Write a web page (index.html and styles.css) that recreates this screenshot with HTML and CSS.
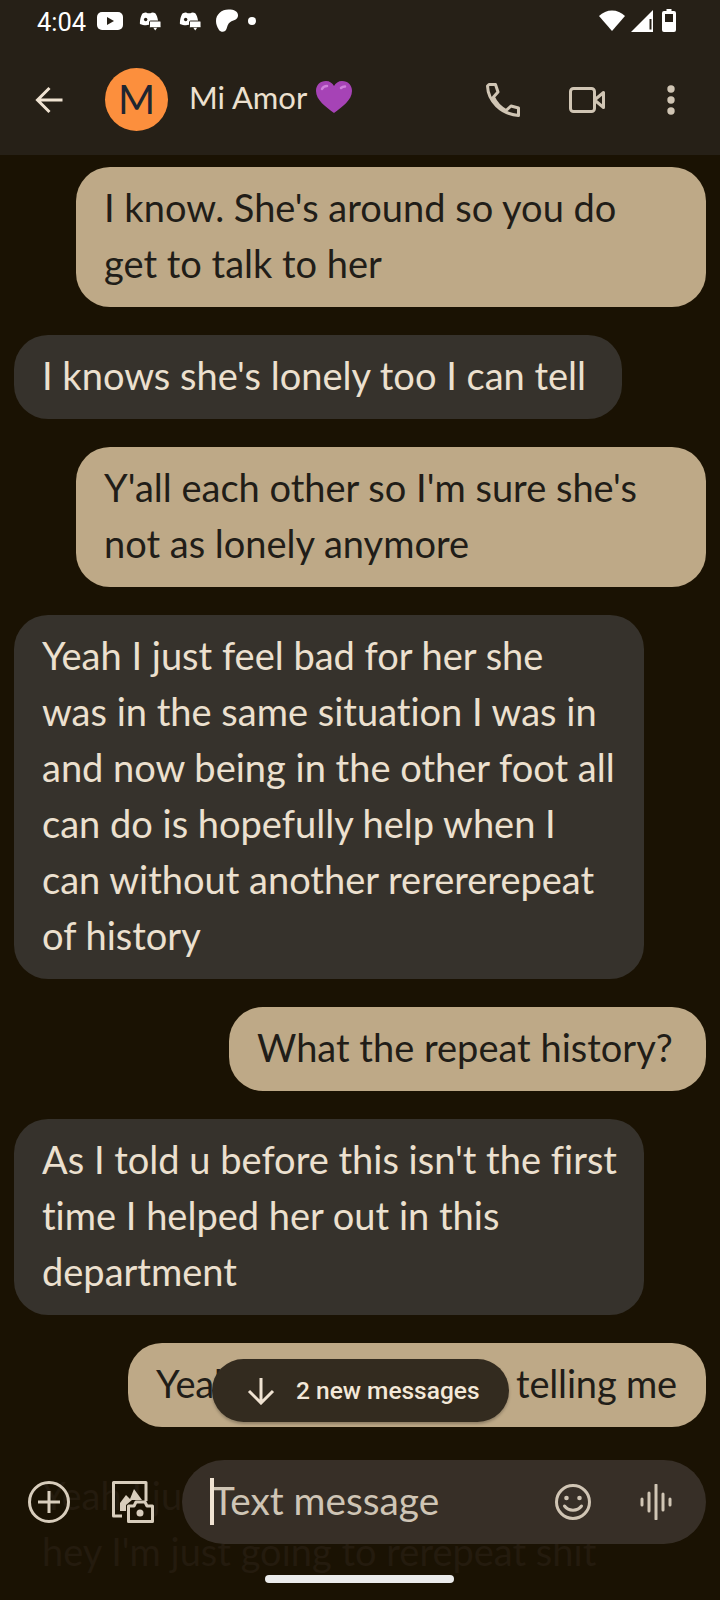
FILE: index.html

```html
<!DOCTYPE html>
<html lang="en">
<head>
    <meta charset="UTF-8">
    <meta name="viewport" content="width=device-width, initial-scale=1.0">
    <title>Mi Amor</title>
    <link rel="stylesheet" href="styles.css">
</head>
<body>
    <div class="screen">
        <header class="top">
            <div class="status">
                <span class="clock">4:04</span>
                <svg class="st-yt" viewBox="0 0 26 18"><rect width="26" height="18" rx="5" fill="#fff"/><path d="M10 5l7 4-7 4z" fill="#262017"/></svg>
                <svg class="st-chat" viewBox="0 0 24 20"><path d="M5 2c3-1.500 4-1 5 0h3c1-1 3-1.500 5 0 1.500 1.500 2.500 5 3 8h-8v5l-2-1c-3 1-6 0-9-1C2 9 3 4 5 2z" fill="#fff"/><circle cx="8" cy="8.500" r="1.800" fill="#262017"/><rect x="12" y="10" width="12" height="7" rx="1" fill="#fff" stroke="#262017"/><path d="M16 17h4l-2 3z" fill="#fff"/></svg>
                <svg class="st-chat" viewBox="0 0 24 20"><path d="M5 2c3-1.500 4-1 5 0h3c1-1 3-1.500 5 0 1.500 1.500 2.500 5 3 8h-8v5l-2-1c-3 1-6 0-9-1C2 9 3 4 5 2z" fill="#fff"/><circle cx="8" cy="8.500" r="1.800" fill="#262017"/><rect x="12" y="10" width="12" height="7" rx="1" fill="#fff" stroke="#262017"/><path d="M16 17h4l-2 3z" fill="#fff"/></svg>
                <svg class="st-blob" viewBox="0 0 24 24"><path d="M0 12C0 5 6 0 13 0c6 0 10 2 10 6 0 5-5 5-8 7-3 2-3 5-4 7-1 4-6 4-8 1C1 18 0 15 0 12z" fill="#fff"/></svg>
                <span class="st-dot"></span>
                <span class="status-right">
                    <svg class="st-wifi" viewBox="0 0 26 21"><path d="M0 6C7-1.500 19-1.500 26 6L13 21z" fill="#fff"/></svg>
                    <svg class="st-signal" viewBox="0 0 22 22"><path d="M22 0v22H0z" fill="#fff"/><path d="M18.500 9v10.500h2V9z" fill="#262017"/></svg>
                    <svg class="st-batt" viewBox="0 0 14 23"><path d="M4.500 0h5v2H12a2 2 0 0 1 2 2v17a2 2 0 0 1-2 2H2a2 2 0 0 1-2-2V4a2 2 0 0 1 2-2h2.500z" fill="#fff"/><rect x="3" y="5" width="8" height="8" fill="#262017"/></svg>
                </span>
            </div>
            <div class="toolbar">
                <svg class="ic-back" viewBox="0 0 28 28"><path d="M27 14H3M14 2L2 14l12 12" fill="none" stroke="#f0e3d2" stroke-width="3"/></svg>
                <div class="avatar">M</div>
                <div class="name">Mi Amor <svg class="heart" viewBox="0 0 36 32"><path d="M18 32C10 26 0 19 0 10 0 4 4 0 10 0c3.500 0 6.500 2 8 5 1.500-3 4.500-5 8-5 6 0 10 4 10 10 0 9-10 16-18 22z" fill="#a643b6"/><path d="M6 8c1-2 3-3 5-3" fill="none" stroke="#cf7fdb" stroke-width="2.500" stroke-linecap="round"/><path d="M25 7c1-1 2-1.500 4-1.500" fill="none" stroke="#cf7fdb" stroke-width="2.500" stroke-linecap="round"/></svg></div>
                <div class="actions">
                    <svg class="ic-phone" viewBox="0 0 34 34"><path d="M3 1.500H9.500L12 9 7.500 14C10 20 14 24 20 27.500L25 23 32.500 25V32.500C15 31 2 18 1.500 3z" fill="none" stroke="#d0c5b4" stroke-width="3" stroke-linejoin="round"/></svg>
                    <svg class="ic-video" viewBox="0 0 36 26"><rect x="1.500" y="1.500" width="24" height="23" rx="3" fill="none" stroke="#d0c5b4" stroke-width="3"/><path d="M25.500 13l9-7.500v15z" fill="none" stroke="#d0c5b4" stroke-width="3" stroke-linejoin="round"/></svg>
                    <svg class="ic-more" viewBox="0 0 8 30"><circle cx="4" cy="4" r="3.700" fill="#d0c5b4"/><circle cx="4" cy="15" r="3.700" fill="#d0c5b4"/><circle cx="4" cy="26" r="3.700" fill="#d0c5b4"/></svg>
                </div>
            </div>
        </header>

        <main class="thread">
            <div class="msg sent wide">I know. She's around so you do get to talk to her</div>
            <div class="msg recv w-lonely">I knows she's lonely too I can tell</div>
            <div class="msg sent wide">Y'all each other so I'm sure she's not as lonely anymore</div>
            <div class="msg recv wide">Yeah I just feel bad for her she was in the same situation I was in and now being in the other foot all can do is hopefully help when I can without another rerererepeat of history</div>
            <div class="msg sent w-repeat">What the repeat history?</div>
            <div class="msg recv wide lines">As I told u before this isn't the first<br>time I helped her out in this<br>department</div>
            <div class="msg sent w-telling">Yeah I know you kept telling me</div>
            <div class="msg ghost">Yeah I just<br>hey I'm just going to rerepeat shit</div>
        </main>

        <div class="new-pill">
            <svg class="ic-down" viewBox="0 0 28 28"><path d="M14 1v25M2 14l12 12 12-12" fill="none" stroke="#f0e3d2" stroke-width="3"/></svg>
            <span>2 new messages</span>
        </div>

        <footer class="composer">
            <svg class="ic-add" viewBox="0 0 42 42"><circle cx="21" cy="21" r="19.500" fill="none" stroke="#d8cdbc" stroke-width="3"/><path d="M21 10v22M10 21h22" fill="none" stroke="#d8cdbc" stroke-width="3"/></svg>
            <svg class="ic-media" viewBox="0 0 42 42"><path d="M10 35H1.500V1.500H34V20" fill="none" stroke="#d8cdbc" stroke-width="3" stroke-linejoin="round"/><path d="M8 30V22L14 14 18 18 22 8 30 19H20L14 24V30z" fill="#d8cdbc"/><path d="M16.500 25H22L24 21H33L35 25H40.500V40.500H16.500z" fill="#1a1203" stroke="#d8cdbc" stroke-width="3" stroke-linejoin="round"/><circle cx="28" cy="32" r="3.500" fill="#d8cdbc"/></svg>
            <div class="field">
                <span class="caret"></span>
                <span class="placeholder">Text message</span>
                <svg class="ic-emoji" viewBox="0 0 36 36"><circle cx="18" cy="18" r="16.500" fill="none" stroke="#d0c5b4" stroke-width="3"/><circle cx="11.500" cy="14" r="2.300" fill="#d0c5b4"/><circle cx="24.500" cy="14" r="2.300" fill="#d0c5b4"/><path d="M9.500 22c4 5.500 13 5.500 17 0" fill="none" stroke="#d0c5b4" stroke-width="3" stroke-linecap="round"/></svg>
                <svg class="ic-voice" viewBox="0 0 32 36"><path d="M2 15v6M9 9v18M16 1v34M23 10v16M30 15v6" fill="none" stroke="#d0c5b4" stroke-width="3" stroke-linecap="round"/></svg>
            </div>
        </footer>

        <div class="home-bar"></div>
    </div>
</body>
</html>
```

FILE: styles.css

```css
* {
    box-sizing: border-box;
}
body {
    margin: 0;
    background-color: #1a1203;
    font-family: Lato, "Noto Sans", sans-serif;
    font-variant-ligatures: none;
}
.screen {
    position: relative;
    width: 720px;
    height: 1600px;
    overflow: hidden;
    background-color: #1a1203;
}
.top {
    height: 155px;
    background-color: #262017;
}
.status {
    display: flex;
    align-items: center;
    height: 44px;
    padding: 0 44px 0 37px;
    color: #fff;
}
.clock {
    font-family: Roboto, sans-serif;
    font-size: 25.5px;
    margin-right: 11px;
}
.st-yt {
    width: 26px;
    height: 18px;
    margin-right: 15px;
    margin-bottom: 3px;
}
.st-chat {
    width: 23px;
    height: 20px;
    margin-right: 17px;
    margin-bottom: 2px;
}
.st-blob {
    width: 23px;
    height: 24px;
    margin-left: -2px;
    margin-right: 9px;
    margin-bottom: 3px;
}
.st-dot {
    width: 8px;
    height: 8px;
    margin-bottom: 3px;
    border-radius: 50%;
    background-color: #fff;
}
.status-right {
    display: flex;
    align-items: center;
    margin-left: auto;
    margin-bottom: 3px;
    gap: 6px;
}
.st-wifi {
    width: 26px;
    height: 21px;
}
.st-signal {
    width: 22px;
    height: 22px;
}
.st-batt {
    width: 14px;
    height: 23px;
    margin-left: 3px;
}
.toolbar {
    display: flex;
    align-items: center;
    height: 111px;
    padding-left: 35px;
}
.ic-back {
    width: 29px;
    height: 28px;
}
.avatar {
    width: 63px;
    height: 63px;
    margin-left: 41px;
    border-radius: 50%;
    background-color: #fc8f3d;
    color: #202530;
    font-size: 40px;
    line-height: 63px;
    text-align: center;
}
.name {
    display: flex;
    align-items: center;
    gap: 9px;
    margin-left: 21px;
    margin-bottom: 5px;
    color: #ece0cf;
    font-size: 31px;
}
.heart {
    width: 36px;
    height: 32px;
}
.actions {
    display: flex;
    align-items: center;
    margin-left: auto;
    padding-right: 45px;
}
.ic-phone {
    width: 34px;
    height: 34px;
}
.ic-video {
    width: 36px;
    height: 26px;
    margin-left: 49px;
}
.ic-more {
    width: 8px;
    height: 30px;
    margin-left: 62px;
}
.thread {
    display: flex;
    flex-direction: column;
    gap: 28px;
    padding: 12px 14px 0;
}
.msg {
    padding: 12px 28px 16px;
    border-radius: 34px;
    font-size: 38px;
    line-height: 56px;
    max-width: 630px;
}
.msg.wide {
    width: 630px;
}
.lines {
    white-space: nowrap;
}
.w-lonely {
    width: 608px;
    white-space: nowrap;
}
.w-repeat {
    width: 477px;
    white-space: nowrap;
}
.w-telling {
    width: 578px;
    white-space: nowrap;
    letter-spacing: -0.17px;
}
.sent {
    align-self: flex-end;
    background-color: #bea987;
    color: #211d18;
}
.recv {
    align-self: flex-start;
    background-color: #36322c;
    color: #ece0cf;
}
.ghost {
    align-self: flex-start;
    width: 630px;
    color: #241b0e;
}
.new-pill {
    position: absolute;
    left: 212px;
    top: 1359px;
    display: flex;
    align-items: center;
    width: 297px;
    height: 63px;
    padding-left: 35px;
    border-radius: 32px;
    background-color: #332b1f;
    box-shadow: 0 2px 3px rgba(0, 0, 0, 0.25);
    color: #f3e8d8;
    font-family: Roboto, sans-serif;
    font-size: 24.5px;
    font-weight: 500;
}
.ic-down {
    width: 28px;
    height: 28px;
    margin-right: 21px;
}
.composer {
    position: absolute;
    left: 0;
    right: 14px;
    top: 1460px;
    display: flex;
    align-items: center;
    height: 84px;
    padding-left: 28px;
}
.ic-add {
    width: 42px;
    height: 42px;
}
.ic-media {
    width: 42px;
    height: 42px;
    margin-left: 42px;
}
.field {
    position: relative;
    display: flex;
    align-items: center;
    flex: 1;
    height: 84px;
    margin-left: 28px;
    padding-left: 30px;
    border-radius: 42px;
    background-color: #372f27;
}
.caret {
    position: absolute;
    left: 28px;
    top: 18px;
    width: 4px;
    height: 47px;
    background-color: #f0e3d2;
}
.placeholder {
    margin-bottom: 4px;
    color: #cfc5b5;
    font-size: 38.8px;
}
.ic-emoji {
    width: 36px;
    height: 36px;
    margin-left: auto;
}
.ic-voice {
    width: 32px;
    height: 36px;
    margin-left: 49px;
    margin-right: 34px;
}
.home-bar {
    position: absolute;
    left: 265px;
    top: 1575px;
    width: 189px;
    height: 8px;
    border-radius: 4px;
    background-color: #ebebeb;
}
```
